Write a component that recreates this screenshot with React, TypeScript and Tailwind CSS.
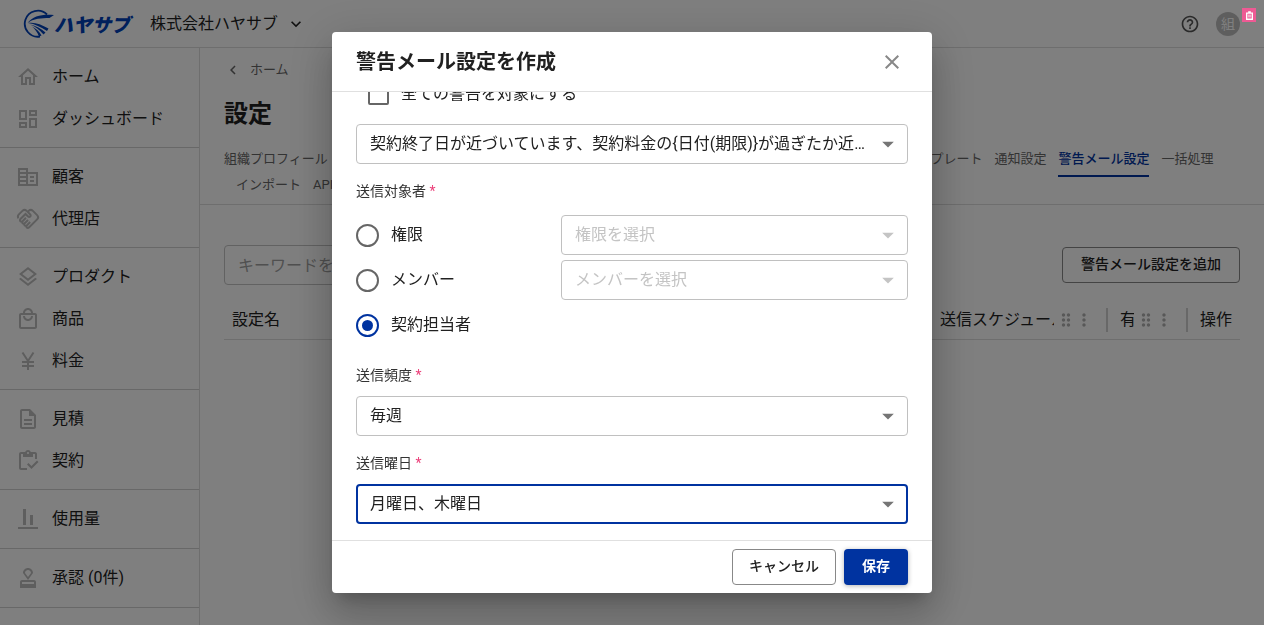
import { type ComponentType, type JSX, type ReactNode } from "react"
import {
    MdArrowDropDown,
    MdChevronLeft,
    MdClose,
    MdDragIndicator,
    MdExpandMore,
    MdHelpOutline,
    MdMoreVert,
    MdOutlineDashboard,
    MdOutlineHandshake,
    MdOutlineHome,
    MdOutlineLayers,
    MdOutlineLocalMall,
} from "react-icons/md"

type IconProps = { className?: string }

function CompanyIcon({ className }: IconProps): JSX.Element {
    return (
        <svg viewBox="0 0 24 24" className={className} fill="none" stroke="currentColor" strokeWidth="2">
            <path d="M3 4h8v16H3zM3 8h8M3 12h8M3 16h8M11 8h10v12H11M14 12h4M14 16h4" />
        </svg>
    )
}

function YenIcon({ className }: IconProps): JSX.Element {
    return (
        <svg viewBox="0 0 24 24" className={className} fill="none" stroke="currentColor" strokeWidth="2">
            <path d="M6.500 3.500 12 12l5.500-8.500M12 12v9M6 13h12M6 17h12" />
        </svg>
    )
}

function QuoteIcon({ className }: IconProps): JSX.Element {
    return (
        <svg viewBox="0 0 24 24" className={className} fill="currentColor">
            <path d="M8 16h8v2H8zm0-4h8v2H8zm6-10H6c-1.100 0-2 .9-2 2v16c0 1.100.89 2 1.990 2H18c1.100 0 2-.9 2-2V8l-6-6zm4 18H6V4h7v5h5v11z" />
        </svg>
    )
}

function ContractIcon({ className }: IconProps): JSX.Element {
    return (
        <svg viewBox="0 0 24 24" className={className} fill="currentColor">
            <path d="M5 5h2v3h10V5h2v5h2V5c0-1.100-.9-2-2-2h-4.180C14.400 1.840 13.300 1 12 1s-2.400.84-2.820 2H5c-1.100 0-2 .9-2 2v14c0 1.100.9 2 2 2h6v-2H5V5zm7-2c.55 0 1 .45 1 1s-.45 1-1 1-1-.45-1-1 .45-1 1-1z" />
            <path d="m21 11.500-5.510 5.510-3-3-1.490 1.500L15.490 20 22.500 13z" />
        </svg>
    )
}

function UsageIcon({ className }: IconProps): JSX.Element {
    return (
        <svg viewBox="0 0 24 24" className={className} fill="currentColor">
            <path d="M22 22H2v-2h20v2zM10 2H7v16h3V2zm7 6h-3v10h3V8z" />
        </svg>
    )
}

function StampIcon({ className }: IconProps): JSX.Element {
    return (
        <svg viewBox="0 0 24 24" className={className} fill="currentColor">
            <path d="M18 14H6c-1.100 0-2 .9-2 2v6h16v-6c0-1.100-.9-2-2-2zm0 4H6v-2h12v2zM12 2C9.240 2 7 4.240 7 7l5 7 5-7c0-2.760-2.240-5-5-5zm0 9L9 7c0-1.660 1.340-3 3-3s3 1.340 3 3l-3 4z" />
        </svg>
    )
}

function Logo(): JSX.Element {
    return (
        <a href="#" className="flex w-28 items-center text-[#0040b8]">
            <svg viewBox="0 0 32 30" className="h-[30px] w-8 shrink-0" fill="none" stroke="currentColor">
                <path d="M25 5.500A13 13 0 1 0 18 27.500" strokeWidth="1.800" />
                <path d="M32 6C21 5 11 6.500 5.500 14c6-4.500 14-5 22-5L32 6z" fill="currentColor" stroke="none" />
                <path d="M6 14c7-1 13 1.500 20.500 5.500l-1.500 2.500C19 18 13 15 6 14z" fill="currentColor" stroke="none" />
                <path d="M8 15.500c6 1.500 11 4 15.500 8l-2 2C17.500 21 13.500 17.500 8 15.500z" fill="currentColor" stroke="none" />
                <path d="M10 17.500c4 2 7.500 5 9.500 9l-2.500 1C15.500 23.500 13 20 10 17.500z" fill="currentColor" stroke="none" />
            </svg>
            <span className="pt-1 text-[19px] leading-6 font-black whitespace-nowrap italic">ハヤサブ</span>
        </a>
    )
}

const menu: { label: string; Icon: ComponentType<IconProps> }[][] = [
    [
        { label: "ホーム", Icon: MdOutlineHome },
        { label: "ダッシュボード", Icon: MdOutlineDashboard },
    ],
    [
        { label: "顧客", Icon: CompanyIcon },
        { label: "代理店", Icon: MdOutlineHandshake },
    ],
    [
        { label: "プロダクト", Icon: MdOutlineLayers },
        { label: "商品", Icon: MdOutlineLocalMall },
        { label: "料金", Icon: YenIcon },
    ],
    [
        { label: "見積", Icon: QuoteIcon },
        { label: "契約", Icon: ContractIcon },
    ],
    [{ label: "使用量", Icon: UsageIcon }],
    [{ label: "承認 (0件)", Icon: StampIcon }],
]

const tabs = [
    "組織プロフィール",
    "メンバー管理",
    "権限設定",
    "税率設定",
    "請求書設定",
    "カスタムフィールド",
    "ステータス管理",
    "メールテンプレート",
    "通知設定",
    "警告メール設定",
    "一括処理",
    "インポート",
    "API連携",
]

function Header(): JSX.Element {
    return (
        <header className="flex h-12 shrink-0 items-center border-b border-[#dcdcdc] pr-6 pl-[22px]">
            <Logo />
            <button type="button" className="ml-4 flex items-center gap-2">
                株式会社ハヤサブ
                <MdExpandMore className="size-5" />
            </button>
            <a href="#" aria-label="ヘルプ" className="ml-auto text-[#555]">
                <MdHelpOutline className="size-5" />
            </a>
            <span className="ml-4 flex size-6 items-center justify-center rounded-full bg-[#bdbdbd] text-sm text-white">組</span>
        </header>
    )
}

function Sidebar(): JSX.Element {
    return (
        <nav className="w-[200px] shrink-0 overflow-hidden border-r border-[#dcdcdc]">
            {menu.map((group) => (
                <ul
                    key={group[0].label}
                    className={group.length === 1 ? "border-b border-[#d0d0d0] py-2" : "border-b border-[#d0d0d0] pt-2 pb-[7px]"}
                >
                    {group.map(({ label, Icon }) => (
                        <li key={label}>
                            <a href="#" className="flex h-[42px] items-center gap-3 pl-4">
                                <Icon className="size-6 text-[#bdbdbd]" />
                                {label}
                            </a>
                        </li>
                    ))}
                </ul>
            ))}
        </nav>
    )
}

function ColumnHeading({ children }: { children: ReactNode }): JSX.Element {
    return (
        <div className="flex items-center">
            <span className="mr-[2px] min-w-0 flex-1 overflow-hidden whitespace-nowrap">{children}</span>
            <span className="flex shrink-0 items-center -space-x-[2px] text-[#b0b0b0]">
                <MdDragIndicator className="size-5" />
                <MdMoreVert className="size-5" />
            </span>
            <span className="mr-1 ml-3 h-6 w-[2px] bg-[#d0d0d0]" />
        </div>
    )
}

function SettingsPage(): JSX.Element {
    return (
        <main className="min-w-0 flex-1">
            <div className="border-b border-[#dcdcdc] px-6 pt-3 pb-[6px]">
                <a href="#" className="flex h-5 items-center gap-2 text-[13px] text-[#666]">
                    <MdChevronLeft className="size-[18px]" />
                    ホーム
                </a>
                <h1 className="mt-4 text-2xl leading-9 font-bold">設定</h1>
                <div className="mt-[14px] flex flex-wrap text-[13px] leading-[26px] text-[#666]">
                    {tabs.map((tab, i) =>
                        tab === "警告メール設定" ? (
                            <a
                                key={tab}
                                href="#"
                                aria-current="page"
                                className="relative ml-3 font-medium text-[#0033a0] after:absolute after:inset-x-0 after:top-[29px] after:h-[2px] after:bg-[#0033a0]"
                            >
                                {tab}
                            </a>
                        ) : (
                            <a key={tab} href="#" className={i === 0 ? "" : "ml-3"}>
                                {tab}
                            </a>
                        ),
                    )}
                </div>
            </div>

            <div className="px-6 pt-10">
                <div className="flex items-center justify-between">
                    <input
                        type="search"
                        aria-label="キーワード"
                        placeholder="キーワードを入力"
                        className="h-10 w-[300px] rounded border border-[#c4c4c4] px-[13px] placeholder:text-[#a0a0a0]"
                    />
                    <button type="button" className="h-9 rounded border border-[#888] px-[18px] pb-[2px] text-sm font-medium">
                        警告メール設定を追加
                    </button>
                </div>

                <table className="mt-[14px] w-full table-fixed border-b border-[#dcdcdc] text-left">
                    <thead>
                        <tr className="h-10">
                            <th className="px-2 pt-[2px] font-normal">設定名</th>
                            <th className="w-[180px] pt-[2px] pl-2 font-normal">
                                <ColumnHeading>送信スケジュール</ColumnHeading>
                            </th>
                            <th className="w-20 pt-[2px] pl-2 font-normal">
                                <ColumnHeading>有効</ColumnHeading>
                            </th>
                            <th className="w-12 px-2 pt-[2px] font-normal">操作</th>
                        </tr>
                    </thead>
                </table>
            </div>
        </main>
    )
}

type SelectProps = { id: string; value: string; disabled?: boolean; focused?: boolean; label?: string }

function Select({ id, value, disabled, focused, label }: SelectProps): JSX.Element {
    return (
        <div className={disabled ? "relative text-[#c4c4c4]" : "relative text-[#757575]"}>
            <select
                id={id}
                aria-label={label}
                disabled={disabled}
                className={
                    focused
                        ? "h-10 w-full appearance-none truncate rounded border-2 border-[#0033a0] bg-white pr-9 pl-3 text-[#212121] outline-none"
                        : "h-10 w-full appearance-none truncate rounded border border-[#c0c0c0] bg-white pr-9 pl-[13px] text-[#212121] opacity-100 outline-none disabled:text-[#c4c4c4]"
                }
            >
                <option>{value}</option>
            </select>
            <MdArrowDropDown className="pointer-events-none absolute top-[6px] right-[6px] size-7" />
        </div>
    )
}

function FieldLabel({ htmlFor, children }: { htmlFor: string; children: ReactNode }): JSX.Element {
    return (
        <label htmlFor={htmlFor} className="block text-sm leading-5 text-[#333]">
            {children} <span className="text-[#ec407a]">*</span>
        </label>
    )
}

function TargetRadio({ label, checked }: { label: string; checked?: boolean }): JSX.Element {
    return (
        <label className="flex h-10 w-[205px] items-center gap-3">
            <input
                type="radio"
                name="target"
                defaultChecked={checked}
                className="grid size-[23px] appearance-none place-items-center rounded-full border-2 border-[#666] before:size-[11px] before:rounded-full checked:border-[#0033a0] checked:before:bg-[#0033a0]"
            />
            {label}
        </label>
    )
}

function MailDialog(): JSX.Element {
    return (
        <div className="fixed inset-0 flex justify-center bg-black/50 p-8">
            <div
                role="dialog"
                aria-labelledby="dialog-title"
                className="flex max-h-full w-full max-w-[600px] flex-col rounded bg-white shadow-[0_11px_15px_-7px_rgba(0,0,0,0.2),0_24px_38px_3px_rgba(0,0,0,0.14),0_9px_46px_8px_rgba(0,0,0,0.12)]"
            >
                <div className="flex h-[60px] shrink-0 items-center justify-between border-b border-[#e0e0e0] px-6">
                    <h2 id="dialog-title" className="text-xl font-bold">警告メール設定を作成</h2>
                    <button type="button" aria-label="閉じる" className="p-1 text-[#888]">
                        <MdClose className="size-6" />
                    </button>
                </div>

                {/* column-reverse keeps the body scrolled to its end */}
                <div className="flex min-h-0 flex-1 flex-col-reverse overflow-y-auto px-6 [scrollbar-width:none]">
                    <div className="pb-4">
                        <label className="flex h-10 items-center gap-3 pl-3">
                            <input type="checkbox" className="size-[21px] appearance-none rounded-xs border-2 border-[#666] checked:bg-[#0033a0]" />
                            全ての警告を対象にする
                        </label>
                        <div className="mt-[10px]">
                            <Select
                                id="alerts"
                                label="対象の警告"
                                value="契約終了日が近づいています、契約料金の{日付(期限)}が過ぎたか近づいています"
                            />
                        </div>

                        <fieldset className="mt-[17px]">
                            <legend className="text-sm leading-5 text-[#333]">
                                送信対象者 <span className="text-[#ec407a]">*</span>
                            </legend>
                            <div className="mt-[14px] flex flex-col gap-[5px]">
                                <div className="flex">
                                    <TargetRadio label="権限" />
                                    <div className="flex-1">
                                        <Select id="role" label="権限" value="権限を選択" disabled />
                                    </div>
                                </div>
                                <div className="flex">
                                    <TargetRadio label="メンバー" />
                                    <div className="flex-1">
                                        <Select id="member" label="メンバー" value="メンバーを選択" disabled />
                                    </div>
                                </div>
                                <TargetRadio label="契約担当者" checked />
                            </div>
                        </fieldset>

                        <div className="mt-5">
                            <FieldLabel htmlFor="frequency">送信頻度</FieldLabel>
                            <div className="mt-[11px]">
                                <Select id="frequency" value="毎週" />
                            </div>
                        </div>

                        <div className="mt-[17px]">
                            <FieldLabel htmlFor="weekday">送信曜日</FieldLabel>
                            <div className="mt-[11px]">
                                <Select id="weekday" value="月曜日、木曜日" focused />
                            </div>
                        </div>
                    </div>
                </div>

                <div className="flex shrink-0 justify-end gap-2 border-t border-[#e0e0e0] px-6 py-2 text-sm">
                    <button type="button" className="h-9 rounded border border-[#888] px-4 pb-[2px] font-medium">キャンセル</button>
                    <button
                        type="button"
                        className="h-9 w-16 rounded bg-[#0033a0] pb-[2px] font-bold text-white shadow-[0_1px_5px_rgba(0,0,0,0.3)]"
                    >
                        保存
                    </button>
                </div>
            </div>
        </div>
    )
}

function App(): JSX.Element {
    return (
        <div className="flex h-screen flex-col overflow-hidden bg-white font-[Roboto,'Noto_Sans_CJK_JP',sans-serif] text-base text-[#212121]">
            <Header />
            <div className="flex min-h-0 flex-1">
                <Sidebar />
                <SettingsPage />
            </div>
            <MailDialog />
            <button
                type="button"
                aria-label="メモ"
                className="fixed top-2 right-2 flex size-[14px] items-center justify-center bg-[#ee5a94] text-white"
            >
                <svg viewBox="0 0 8 10" className="h-[9px] w-[7px]" fill="currentColor">
                    <path fillRule="evenodd" d="M0 1.500h2.500V0h3v1.500H8V10H0zM1.500 3v5.500h5V3z" />
                    <path d="M2 4h4v1H2zM2 6h4v1H2z" />
                </svg>
            </button>
        </div>
    )
}

export default App
